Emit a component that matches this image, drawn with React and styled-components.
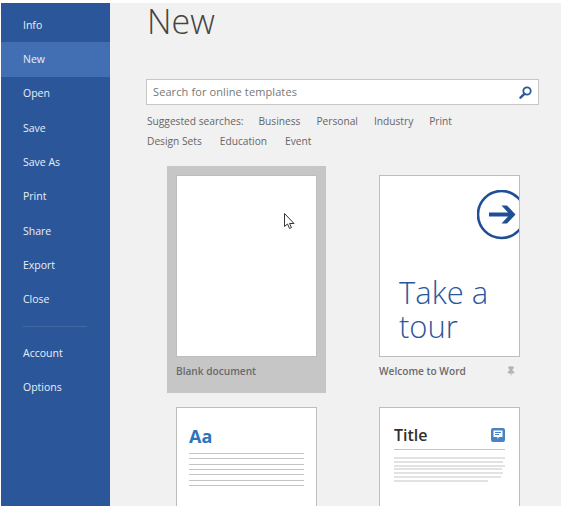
import styled, { createGlobalStyle } from 'styled-components';
import { Pin } from 'lucide-react';

const GlobalStyle = createGlobalStyle`
  html, body {
    margin: 0;
    padding: 0;
    background: #fff;
  }
  body {
    font-family: "Open Sans", "Noto Sans", "Liberation Sans", sans-serif;
  }
`;

const Frame = styled.div`
  box-sizing: border-box;
  width: 561px;
  height: 509px;
  padding: 3px 0 3px 1px;
  overflow: hidden;
  background: #fff;
`;

const Window = styled.div`
  position: relative;
  display: flex;
  height: 100%;
  overflow: hidden;
  background: #f1f1f1;
`;

const Sidebar = styled.nav`
  flex: 0 0 109px;
  box-sizing: border-box;
  padding-top: 5px;
  background: #2b579a;
`;

const NavItem = styled.div`
  box-sizing: border-box;
  display: flex;
  align-items: center;
  height: 34.3px;
  padding: 0 0 0.5px 22px;
  color: #e8eef6;
  font-size: 10.5px;
  background: ${({ $active }) => ($active ? '#426fb4' : 'transparent')};
`;

const NavDivider = styled.div`
  width: 64px;
  height: 1px;
  margin: 9px 0 9.5px 22px;
  background: #44699f;
`;

const Main = styled.main`
  flex: 1;
  min-width: 0;
  padding-left: 36px;
`;

const Title = styled.h1`
  margin: 0;
  height: 76px;
  padding-left: 1px;
  color: #444;
  font-size: 34px;
  font-weight: 300;
  line-height: 37px;
`;

const SearchBox = styled.div`
  box-sizing: border-box;
  display: flex;
  align-items: center;
  justify-content: space-between;
  width: 393px;
  height: 26px;
  padding: 0 6px 2px;
  background: #fff;
  border: 1px solid #c6c6c6;
  color: #777;
  font-size: 11px;
  letter-spacing: 0.1px;
`;

const SearchIcon = styled.svg`
  margin-top: 2px;
`;

const Suggestions = styled.div`
  display: flex;
  flex-wrap: wrap;
  width: 340px;
  margin-top: 7px;
  padding-left: 1px;
`;

const Suggestion = styled.span`
  height: 19.5px;
  margin-right: ${({ $gap }) => $gap}px;
  color: #666;
  font-size: 10.2px;
  line-height: 18px;
`;

const Templates = styled.div`
  display: grid;
  grid-template-columns: 159px 159px;
  grid-auto-rows: 227px;
  column-gap: 44px;
  row-gap: 5px;
  margin: 15px 0 0 21px;
`;

const Card = styled.div`
  box-sizing: border-box;
  padding: 9px 9px 0;
  background: ${({ $selected }) => ($selected ? '#c6c6c6' : 'transparent')};
`;

const Thumb = styled.div`
  box-sizing: border-box;
  position: relative;
  overflow: hidden;
  width: 140.6px;
  height: 182px;
  background: #fff;
  border: 1px solid #bdbdbd;
`;

const CardFooter = styled.div`
  display: flex;
  align-items: center;
  justify-content: space-between;
  width: 141px;
  height: 28px;
  padding-right: 4px;
  box-sizing: border-box;
  color: #6a6a6a;
  font-size: 10.15px;
  font-weight: 600;
`;

const TourCircle = styled.svg`
  position: absolute;
  top: 14px;
  left: 97px;
`;

const TourText = styled.div`
  padding: 99px 0 0 19px;
  color: #2b579a;
  font-size: 31px;
  font-weight: 300;
  line-height: 34px;
`;

const ThemeLabel = styled.div`
  padding: 16px 0 0 12px;
  color: #2a75bb;
  font-size: 18px;
  font-weight: 700;
  line-height: 24px;
`;

const Rules = styled.div`
  display: flex;
  flex-direction: column;
  gap: ${({ $gap }) => $gap}px;
  margin: ${({ $top }) => $top}px ${({ $side }) => $side}px 0;
`;

const Rule = styled.div`
  height: ${({ $light }) => ($light ? '2px' : '1px')};
  width: ${({ $width }) => $width || '100%'};
  background: ${({ $light }) => ($light ? '#e2e2e2' : '#c4c4c4')};
`;

const TitleHead = styled.div`
  box-sizing: border-box;
  display: flex;
  align-items: center;
  justify-content: space-between;
  margin: 15px 14px 0;
  height: 27px;
  padding-bottom: 2px;
  border-bottom: 1px solid #c4c4c4;
  color: #2f2f2f;
  font-size: 16px;
  font-weight: 600;
`;

const Cursor = styled.svg`
  position: absolute;
  left: 282px;
  top: 209px;
`;

const mainItems = ['Info', 'New', 'Open', 'Save', 'Save As', 'Print', 'Share', 'Export', 'Close'];
const lowerItems = ['Account', 'Options'];
const firstRow = ['Business', 'Personal', 'Industry', 'Print'];
const secondRow = ['Design Sets', 'Education', 'Event'];
const titleLines = ['100%', '99%', '100%', '98%', '99%', '97%', '85%'];

function App() {
  return (
    <>
      <GlobalStyle />
      <Frame>
        <Window>
          <Sidebar>
            {mainItems.map((item) => (
              <NavItem key={item} $active={item === 'New'}>{item}</NavItem>
            ))}
            <NavDivider />
            {lowerItems.map((item) => (
              <NavItem key={item}>{item}</NavItem>
            ))}
          </Sidebar>
          <Main>
            <Title>New</Title>
            <SearchBox>
              Search for online templates
              <SearchIcon width="13" height="13" viewBox="0 0 13 13">
                <circle cx="8" cy="5" r="3.7" fill="none" stroke="#2b579a" strokeWidth="1.8" />
                <path d="M5.4 7.8 1.5 11.7" stroke="#2b579a" strokeWidth="2.4" strokeLinecap="round" />
              </SearchIcon>
            </SearchBox>
            <Suggestions>
              <Suggestion $gap={15}>Suggested searches:</Suggestion>
              {firstRow.map((item) => <Suggestion key={item} $gap={16}>{item}</Suggestion>)}
              {secondRow.map((item) => <Suggestion key={item} $gap={18}>{item}</Suggestion>)}
            </Suggestions>
            <Templates>
              <Card $selected>
                <Thumb />
                <CardFooter>Blank document</CardFooter>
              </Card>
              <Card>
                <Thumb>
                  <TourCircle width="50" height="50" viewBox="0 0 50 50">
                    <circle cx="24.5" cy="24.5" r="23.5" fill="none" stroke="#1f4e96" strokeWidth="2.6" />
                    <path d="M12 22.4h19l-6.5-6.9h5.5l8.5 9-8.5 9h-5.5l6.5-6.9H12z" fill="#1f4e96" />
                  </TourCircle>
                  <TourText>Take a<br />tour</TourText>
                </Thumb>
                <CardFooter>
                  Welcome to Word
                  <Pin size={10} color="#b5b5b5" fill="#b5b5b5" />
                </CardFooter>
              </Card>
              <Card>
                <Thumb>
                  <ThemeLabel>Aa</ThemeLabel>
                  <Rules $top={5} $gap={4.33} $side={12}>
                    {[0, 1, 2, 3, 4, 5, 6].map((n) => <Rule key={n} />)}
                  </Rules>
                </Thumb>
              </Card>
              <Card>
                <Thumb>
                  <TitleHead>
                    Title
                    <svg width="14" height="14" viewBox="0 0 14 14">
                      <rect width="14" height="14" rx="2" fill="#4a83c4" />
                      <path d="M2.5 2.5h9v6.5H8L6.5 11V9h-4z" fill="#fff" />
                      <path d="M4 4.5h6M4 6.5h4" stroke="#4a83c4" />
                    </svg>
                  </TitleHead>
                  <Rules $top={7} $gap={1.8} $side={14}>
                    {titleLines.map((width, i) => <Rule key={i} $light $width={width} />)}
                  </Rules>
                </Thumb>
              </Card>
            </Templates>
          </Main>
          <Cursor width="14" height="20" viewBox="0 0 14 20">
            <path d="M1.5 1.5v13l3-2.5 2 4.5 2-1-2-4h4.5z" fill="#fff" stroke="#333" strokeWidth="1" />
          </Cursor>
        </Window>
      </Frame>
    </>
  );
}

export default App;
